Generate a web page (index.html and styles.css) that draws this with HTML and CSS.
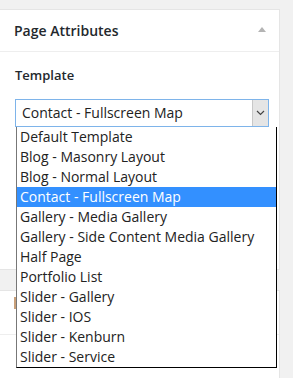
FILE: index.html
```html
<!DOCTYPE html>
<html>
<head>
<meta charset="utf-8">
<link rel="stylesheet" href="styles.css">
</head>
<body>
<div class="panel">
  <div class="panel-head">
    <h2 class="panel-title">Page Attributes</h2>
    <span class="toggle"></span>
  </div>
  <div class="panel-body">
    <p class="label">Template</p>
    <div class="select-wrap">
      <div class="select">
        <span class="select-value">Contact - Fullscreen Map</span>
        <span class="select-arrow">
          <svg width="9" height="6" viewBox="0 0 9 6"><path d="M1 1 L4.5 4.5 L8 1" fill="none" stroke="#444" stroke-width="1.2"/></svg>
        </span>
      </div>
      <ul class="options">
        <li class="option">Default Template</li>
        <li class="option">Blog - Masonry Layout</li>
        <li class="option">Blog - Normal Layout</li>
        <li class="option selected">Contact - Fullscreen Map</li>
        <li class="option">Gallery - Media Gallery</li>
        <li class="option">Gallery - Side Content Media Gallery</li>
        <li class="option">Half Page</li>
        <li class="option">Portfolio List</li>
        <li class="option">Slider - Gallery</li>
        <li class="option">Slider - IOS</li>
        <li class="option">Slider - Kenburn</li>
        <li class="option">Slider - Service</li>
      </ul>
    </div>
  </div>
</div>
<div class="panel panel-second">
  <div class="second-row"><span class="mark"></span></div>
  <div class="second-row second-bottom"></div>
</div>
</body>
</html>
```

FILE: styles.css
```css
* { box-sizing: border-box; }
html, body { margin: 0; padding: 0; }
body {
  background: #f1f1f1;
  font-family: "Open Sans", "Noto Sans", sans-serif;
  color: #23282d;
  width: 293px;
  height: 378px;
  overflow: hidden;
}
.panel {
  margin-top: 9px;
  width: 280px;
  background: #fff;
  border: 1px solid #e5e5e5;
  border-left: none;
}
.panel-head {
  height: 42px;
  border-bottom: 1px solid #eee;
  display: flex;
  align-items: center;
  justify-content: space-between;
  padding: 1px 13px 0 14px;
}
.panel-title {
  margin: 0;
  font-size: 14px;
  font-weight: 600;
  line-height: 1;
  color: #23282d;
}
.toggle {
  width: 0; height: 0;
  border-left: 4px solid transparent;
  border-right: 4px solid transparent;
  border-bottom: 5px solid #b4b4b4;
  margin-top: -4px;
}
.panel-body {
  padding: 14px 11px 0 15px;
  height: 217px;
}
.label {
  margin: 0 0 15px;
  font-size: 13px;
  font-weight: 600;
  line-height: 18px;
  color: #23282d;
}
.select-wrap { position: relative; width: 254px; }
.select {
  height: 28px;
  border: 1px solid #7eb4ea;
  display: flex;
  align-items: stretch;
  justify-content: space-between;
  background: #fff;
}
.select-value {
  font-size: 14px;
  line-height: 26px;
  padding-left: 6px;
  color: #222;
}
.select-arrow {
  width: 16px;
  background: #e5e5e5;
  border-left: 1px solid #c8c8c8;
  display: flex;
  align-items: center;
  justify-content: center;
}
.options {
  position: absolute;
  top: 28px;
  left: 1px;
  width: 261px;
  margin: 0;
  padding: 0;
  list-style: none;
  background: #fff;
  border: 1px solid #000;
  border-left-color: #777;
  border-top: none;
}
.option {
  height: 20px;
  line-height: 20px;
  font-size: 14px;
  padding-left: 3px;
  color: #222;
  white-space: nowrap;
}
.option.selected { background: #3390ff; color: #fff; }
.panel-second {
  margin-top: 20px;
  height: 100px;
}
.second-row {
  height: 44px;
  border-bottom: 1px solid #eee;
  padding: 6px 0 0 14px;
}
.second-bottom { border-bottom: none; }
.mark {
  display: block;
  width: 2px;
  height: 12px;
  background: #c9a07a;
}
```
